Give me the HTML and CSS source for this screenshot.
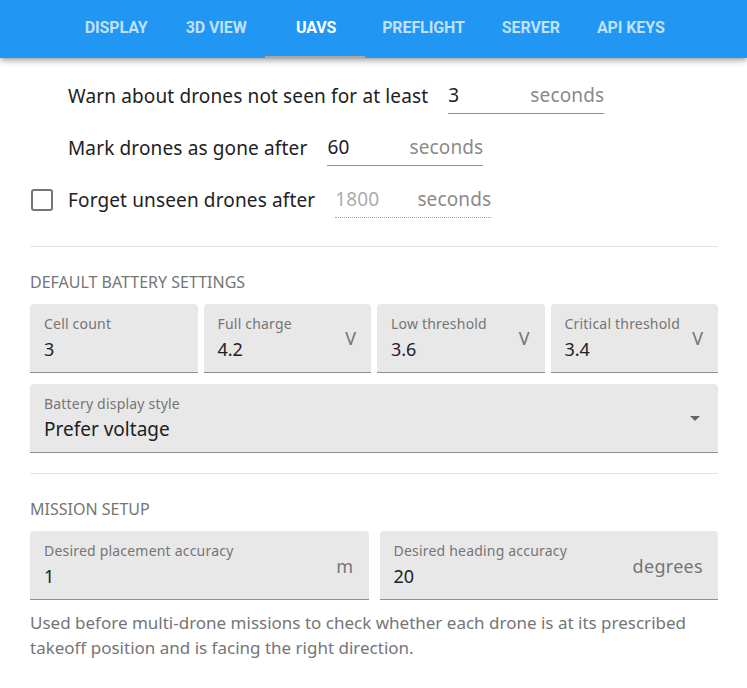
FILE: index.html
```html
<!DOCTYPE html>
<html lang="en">
<head>
<meta charset="utf-8">
<title>Settings - UAVs</title>
<link rel="stylesheet" href="styles.css">
</head>
<body>
<header class="appbar">
  <nav class="tabs">
    <span class="tab">Display</span>
    <span class="tab">3D View</span>
    <span class="tab tab-active">UAVs</span>
    <span class="tab tab-wide">Preflight</span>
    <span class="tab">Server</span>
    <span class="tab">API keys</span>
  </nav>
</header>

<main class="content">
  <section class="timeouts">
    <div class="row">
      <span class="row-label">Warn about drones not seen for at least</span>
      <span class="line-field"><span class="line-value">3</span><span class="line-unit">seconds</span></span>
    </div>
    <div class="row">
      <span class="row-label">Mark drones as gone after</span>
      <span class="line-field"><span class="line-value">60</span><span class="line-unit">seconds</span></span>
    </div>
    <div class="row row-check">
      <span class="checkbox"></span>
      <span class="row-label">Forget unseen drones after</span>
      <span class="line-field line-disabled"><span class="line-value">1800</span><span class="line-unit">seconds</span></span>
    </div>
  </section>

  <hr class="divider">

  <h3 class="section-title">Default battery settings</h3>
  <div class="grid-four">
    <div class="filled">
      <span class="filled-label">Cell count</span>
      <span class="filled-value">3</span>
    </div>
    <div class="filled">
      <span class="filled-label">Full charge</span>
      <span class="filled-value">4.2</span>
      <span class="filled-unit">V</span>
    </div>
    <div class="filled">
      <span class="filled-label">Low threshold</span>
      <span class="filled-value">3.6</span>
      <span class="filled-unit">V</span>
    </div>
    <div class="filled">
      <span class="filled-label">Critical threshold</span>
      <span class="filled-value">3.4</span>
      <span class="filled-unit">V</span>
    </div>
  </div>
  <div class="filled filled-select">
    <span class="filled-label">Battery display style</span>
    <span class="filled-value select-value">Prefer voltage</span>
    <span class="select-arrow"></span>
  </div>

  <hr class="divider divider-second">

  <h3 class="section-title">Mission setup</h3>
  <div class="grid-two">
    <div class="filled">
      <span class="filled-label">Desired placement accuracy</span>
      <span class="filled-value">1</span>
      <span class="filled-unit unit-low">m</span>
    </div>
    <div class="filled">
      <span class="filled-label">Desired heading accuracy</span>
      <span class="filled-value">20</span>
      <span class="filled-unit unit-low">degrees</span>
    </div>
  </div>
  <p class="help">Used before multi-drone missions to check whether each drone is at its prescribed takeoff position and is facing the right direction.</p>
</main>
</body>
</html>
```

FILE: styles.css
```css
* {
  box-sizing: border-box;
}

html, body {
  margin: 0;
  padding: 0;
  background: #ffffff;
}

body {
  font-family: "Noto Sans", "Open Sans", sans-serif;
  color: #212121;
}

.appbar {
  height: 58px;
  background: #2196f3;
  box-shadow: 0 2px 4px -1px rgba(0,0,0,0.2), 0 4px 5px 0 rgba(0,0,0,0.14), 0 1px 10px 0 rgba(0,0,0,0.12);
  position: relative;
  z-index: 2;
}

.tabs {
  display: flex;
  justify-content: center;
  height: 100%;
}

.tab {
  position: relative;
  min-width: 100px;
  padding: 0 16px 3px;
  display: flex;
  align-items: center;
  justify-content: center;
  text-transform: uppercase;
  font-family: "Roboto", sans-serif;
  font-weight: 700;
  font-size: 16px;
  letter-spacing: -0.1px;
  color: rgba(255,255,255,0.72);
}

.tab-active {
  color: #ffffff;
}

.tab-active::after {
  content: "";
  position: absolute;
  left: -1px;
  right: 1px;
  bottom: 0;
  height: 2px;
  background: #a7a7a7;
}

.content {
  padding: 12px 29px 0 30px;
}

.timeouts {
  display: flex;
  flex-direction: column;
}

.row {
  display: flex;
  align-items: center;
  height: 52px;
  padding-left: 38px;
  font-size: 19px;
  letter-spacing: 0.14px;
}

.row-check {
  padding-left: 1px;
}

.checkbox {
  width: 22px;
  height: 22px;
  border: 2px solid #757575;
  border-radius: 3px;
  margin-right: 15px;
}

.row-label {
  color: #212121;
  margin-right: 20px;
}

.line-field {
  width: 156px;
  height: 36px;
  display: flex;
  justify-content: space-between;
  align-items: center;
  border-bottom: 1px solid #8f8f8f;
  line-height: 24px;
  padding-bottom: 1px;
}

.line-value {
  color: #212121;
}

.line-unit {
  color: #8a8a8a;
}

.line-disabled {
  border-bottom: 1px dotted #9e9e9e;
}

.line-disabled .line-value {
  color: #acacac;
}

.divider {
  border: 0;
  height: 1px;
  background: #e0e0e0;
  margin: 20px 0 0;
}

.section-title {
  margin: 0;
  height: 57px;
  display: flex;
  align-items: center;
  font-size: 16px;
  font-weight: 400;
  text-transform: uppercase;
  color: #757575;
  padding-top: 12px;
}

.grid-four {
  display: grid;
  grid-template-columns: repeat(4, 1fr);
  gap: 6px;
}

.grid-two {
  display: grid;
  grid-template-columns: 1fr 1fr;
  gap: 11px;
}

.filled {
  position: relative;
  height: 69px;
  background: #e8e8e8;
  border-radius: 4px 4px 0 0;
  border-bottom: 1px solid #8f8f8f;
  padding: 11px 14px 0;
  display: flex;
  flex-direction: column;
}

.filled-label {
  font-size: 14px;
  line-height: 18px;
  letter-spacing: 0.2px;
  color: #757575;
}

.filled-value {
  font-size: 18px;
  line-height: 26px;
  margin-top: 3px;
  color: #212121;
}

.filled-unit {
  position: absolute;
  right: 15px;
  top: 21px;
  font-size: 18px;
  line-height: 26px;
  color: #757575;
}

.unit-low {
  top: 22px;
  letter-spacing: 0.3px;
}

.filled-select {
  margin-top: 11px;
}

.select-value {
  font-size: 19px;
}

.select-arrow {
  position: absolute;
  right: 18px;
  top: 32px;
  width: 0;
  height: 0;
  border-left: 5.5px solid transparent;
  border-right: 5.5px solid transparent;
  border-top: 5.5px solid #666666;
}

.help {
  margin: 10px 0 0;
  font-size: 17px;
  line-height: 25px;
  color: #757575;
}
```
